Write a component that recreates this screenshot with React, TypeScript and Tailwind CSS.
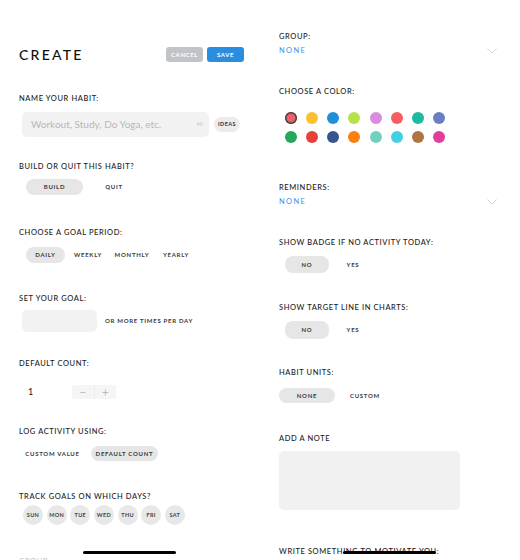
import React from "react";

const label = "text-[7.5px] leading-[10px] tracking-[0.08em] font-medium text-[#1a1a1a]";
const pillText = "text-[6px] leading-none tracking-[0.12em] font-bold text-[#3a3a3a]";

function Option({ text, w, active }: { text: string; w: string; active?: boolean }) {
  return (
    <div
      className={`flex h-full items-center justify-center rounded-[8px] ${w} ${active ? "bg-[#e6e6e6]" : ""}`}
    >
      <span className={pillText}>{text}</span>
    </div>
  );
}

function Chevron() {
  return (
    <svg width="10" height="6" viewBox="0 0 10 6" className="shrink-0">
      <polyline points="0.5,0.5 5,5 9.5,0.5" fill="none" stroke="#d6d6d6" strokeWidth="1" />
    </svg>
  );
}

function HomeBar() {
  return <div className="absolute left-[83px] top-[551px] h-[3px] w-[93px] rounded-full bg-black" />;
}

const colors = [
  "#f0606b", "#fbc02d", "#1e90d8", "#b8e04a", "#d98be0", "#f95d63", "#1fb8a0", "#6a7fc1",
  "#22a95a", "#e8413a", "#37548c", "#fd7f0f", "#72d1bc", "#41d0e0", "#b07440", "#e0409a",
];

function LeftPanel() {
  return (
    <div className="relative h-[560px] w-[260px] shrink-0 overflow-hidden pl-[19px] pt-[47px]">
      {/* Header */}
      <div className="flex h-[15px] items-center pr-[16px]">
        <h1 className="text-[14px] font-medium leading-none tracking-[0.16em] text-[#111]">CREATE</h1>
        <div className="ml-auto flex gap-[4px]">
          <button className="flex h-[15px] w-[37px] items-center justify-center rounded-[3px] bg-[#c0c4c8] text-[6px] font-bold tracking-[0.1em] text-white">
            CANCEL
          </button>
          <button className="flex h-[15px] w-[37px] items-center justify-center rounded-[3px] bg-[#2a8ee0] text-[6px] font-bold tracking-[0.1em] text-white">
            SAVE
          </button>
        </div>
      </div>

      <div className={`${label} mt-[32px]`}>NAME YOUR HABIT:</div>
      <div className="mt-[8px] flex items-center">
        <div className="ml-[3px] flex h-[25px] w-[187px] items-center rounded-[5px] bg-[#f2f2f2] pl-[9px] pr-[6px]">
          <span className="text-[10px] text-[#b8b8b8]">Workout, Study, Do Yoga, etc.</span>
          <span className="ml-auto text-[5.5px] text-[#c8c8c8]">40</span>
        </div>
        <div className="ml-[5px] flex h-[15px] w-[26px] items-center justify-center rounded-full bg-[#ececec]">
          <span className="text-[5.5px] font-bold tracking-[0.08em] text-[#333]">IDEAS</span>
        </div>
      </div>

      <div className={`${label} mt-[25px]`}>BUILD OR QUIT THIS HABIT?</div>
      <div className="ml-[7px] mt-[7px] flex h-[16px]">
        <Option text="BUILD" w="w-[57px]" active />
        <Option text="QUIT" w="w-[62px]" />
      </div>

      <div className={`${label} mt-[33px]`}>CHOOSE A GOAL PERIOD:</div>
      <div className="ml-[7px] mt-[9px] flex h-[16px]">
        <Option text="DAILY" w="w-[39px]" active />
        <Option text="WEEKLY" w="w-[46px]" />
        <Option text="MONTHLY" w="w-[42px]" />
        <Option text="YEARLY" w="w-[46px]" />
      </div>

      <div className={`${label} mt-[31px]`}>SET YOUR GOAL:</div>
      <div className="mt-[6px] flex items-center">
        <div className="ml-[3px] h-[22px] w-[75px] rounded-[5px] bg-[#f2f2f2]" />
        <span className={`${pillText} ml-[8px]`}>OR MORE TIMES PER DAY</span>
      </div>

      <div className={`${label} mt-[27px]`}>DEFAULT COUNT:</div>
      <div className="mt-[16px] flex h-[14px] items-center">
        <span className="ml-[9px] w-[44px] text-[9px] text-[#222]">1</span>
        <div className="flex h-[14px] w-[44px] items-center rounded-[3px] bg-[#f5f5f5]">
          <span className="flex flex-1 items-center justify-center text-[13px] font-light leading-none text-[#999]">−</span>
          <div className="h-[14px] w-px bg-[#ececec]" />
          <span className="flex flex-1 items-center justify-center text-[13px] font-light leading-none text-[#999]">+</span>
        </div>
      </div>

      <div className={`${label} mt-[28px]`}>LOG ACTIVITY USING:</div>
      <div className="mt-[9px] flex h-[15px] gap-[5px]">
        <Option text="CUSTOM VALUE" w="w-[67px]" />
        <Option text="DEFAULT COUNT" w="w-[67px]" active />
      </div>

      <div className={`${label} mt-[31px]`}>TRACK GOALS ON WHICH DAYS?</div>
      <div className="ml-[4px] mt-[3px] flex gap-[3.65px]">
        {["SUN", "MON", "TUE", "WED", "THU", "FRI", "SAT"].map((d) => (
          <div key={d} className="flex h-[20px] w-[20px] items-center justify-center rounded-full bg-[#e8e8e8]">
            <span className="text-[5.5px] font-bold tracking-[0.06em] text-[#444]">{d}</span>
          </div>
        ))}
      </div>

      <div className={`${label} mt-[32px] !text-[#c8c8c8]`}>GROUP</div>

      <HomeBar />
    </div>
  );
}

function RightPanel() {
  return (
    <div className="relative h-[560px] w-[260px] shrink-0 overflow-hidden pl-[19px] pr-[23px] pt-[32px]">
      <div className={label}>GROUP:</div>
      <div className="mt-[4px] flex h-[10px] items-center">
        <span className="text-[7.5px] leading-[10px] tracking-[0.18em] text-[#3b8fe8]">NONE</span>
        <div className="ml-auto">
          <Chevron />
        </div>
      </div>

      <div className={`${label} mt-[31px]`}>CHOOSE A COLOR:</div>
      <div className="ml-[6px] mt-[15px] grid w-[160px] grid-cols-8 gap-x-[9.3px] gap-y-[7px]">
        {colors.map((c, i) => (
          <div
            key={c + i}
            className={`h-[12px] w-[12px] rounded-full ${i === 0 ? "ring-[1.5px] ring-[#444] ring-inset" : ""}`}
            style={{ backgroundColor: c }}
          />
        ))}
      </div>

      <div className={`${label} mt-[40px]`}>REMINDERS:</div>
      <div className="mt-[4px] flex h-[10px] items-center">
        <span className="text-[7.5px] leading-[10px] tracking-[0.18em] text-[#3b8fe8]">NONE</span>
        <div className="ml-auto">
          <Chevron />
        </div>
      </div>

      <div className={`${label} mt-[31px]`}>SHOW BADGE IF NO ACTIVITY TODAY:</div>
      <div className="ml-[6px] mt-[8px] flex h-[17px]">
        <Option text="NO" w="w-[44px]" active />
        <Option text="YES" w="w-[48px]" />
      </div>

      <div className={`${label} mt-[30px]`}>SHOW TARGET LINE IN CHARTS:</div>
      <div className="ml-[6px] mt-[8px] flex h-[18px]">
        <Option text="NO" w="w-[44px]" active />
        <Option text="YES" w="w-[48px]" />
      </div>

      <div className={`${label} mt-[29px]`}>HABIT UNITS:</div>
      <div className="mt-[10px] flex h-[15px]">
        <Option text="NONE" w="w-[56px]" active />
        <Option text="CUSTOM" w="w-[60px]" />
      </div>

      <div className={`${label} mt-[31px]`}>ADD A NOTE</div>
      <div className="mt-[7px] h-[59px] w-[181px] rounded-[5px] bg-[#f1f1f1]" />

      <div className={`${label} mt-[37px]`}>WRITE SOMETHING TO MOTIVATE YOU:</div>

      <HomeBar />
    </div>
  );
}

export default function App() {
  return (
    <div className="flex h-[560px] w-[520px] bg-white font-['Lato','Liberation_Sans',sans-serif]">
      <LeftPanel />
      <RightPanel />
    </div>
  );
}
